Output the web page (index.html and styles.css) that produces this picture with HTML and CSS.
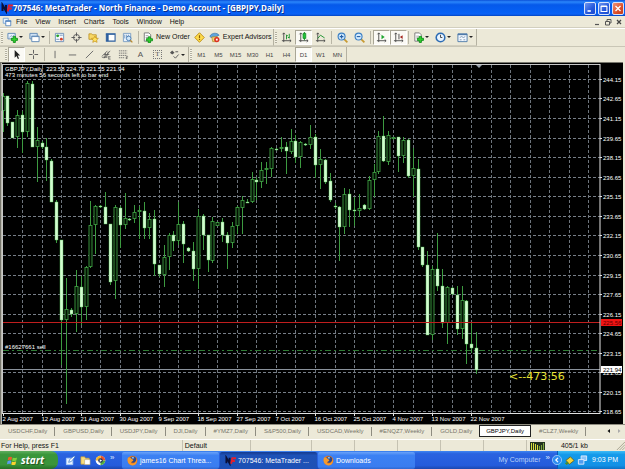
FILE: index.html
```html
<!DOCTYPE html>
<html lang="en">
<head>
<meta charset="utf-8">
<title>707546: MetaTrader - North Finance - Demo Account - [GBPJPY,Daily]</title>
<link rel="stylesheet" href="styles.css">
</head>
<body>
<svg class="defs" aria-hidden="true">
  <defs>
    <symbol id="plus" viewBox="0 0 7 7"><path d="M2.5 .5h2v2h2v2h-2v2h-2v-2h-2v-2h2z" fill="#2fd32f" stroke="#0d8a16" stroke-width=".8"/></symbol>
    <symbol id="fox" viewBox="0 0 12 12"><circle cx="6" cy="6" r="5.3" fill="#e8761a"/><circle cx="6.6" cy="5" r="3.4" fill="#27478f"/><path d="M1 3C3 2 5 4 7 5.500 6 8 4 7 4.500 9 8 10 10 8 10.500 4 12 9 8 12 5 11.200 1 10 0 6 1 3z" fill="#f79a2b"/><path d="M5 2.500l2-.6 1 1.600-2 .6z" fill="#8fc0ee"/></symbol>
    <symbol id="nf" viewBox="0 0 12 12"><path d="M1.500 9V3l3.500 6V3" fill="none" stroke="#0b0f35" stroke-width="2"/><path d="M6.700 9.500L8 3.500h4M7.300 6.500h3.500" fill="none" stroke="#e3202c" stroke-width="2"/></symbol>
    <symbol id="axes" viewBox="0 0 12 12"><path d="M3 1v10M1 9.500h10M1.700 2.500L3 1l1.300 1.500M9.500 8.200L11 9.500 9.500 10.800" fill="none" stroke="#4c4c4c" stroke-width="1"/></symbol>
  </defs>
</svg>

<header class="titlebar">
  <svg class="ico"><use href="#nf"/></svg>
  <h1>707546: MetaTrader - North Finance - Demo Account - [GBPJPY,Daily]</h1>
  <div class="winbtns">
    <button aria-label="Minimize"><svg viewBox="0 0 12 12"><path d="M3 9h4" stroke="#fff" stroke-width="2"/></svg></button>
    <button aria-label="Maximize"><svg viewBox="0 0 12 12"><path d="M2.500 3.500h7v6h-7zM2.500 3h7" fill="none" stroke="#fff" stroke-width="1.300"/></svg></button>
    <button class="close" aria-label="Close"><svg viewBox="0 0 12 12"><path d="M3 3l6 6M9 3l-6 6" stroke="#fff" stroke-width="1.600"/></svg></button>
  </div>
</header>

<nav class="menubar">
  <svg class="ico" viewBox="0 0 12 12"><path d="M1.500 1.500h6v6h-6z" fill="#eaf4ff" stroke="#6d9ccf"/><path d="M4.500 4.500h6v6h-6z" fill="#fff" stroke="#4c80bd"/><path d="M4 5h7" stroke="#4c80bd" stroke-width="1.500"/></svg>
  <button>File</button><button>View</button><button>Insert</button><button>Charts</button><button>Tools</button><button>Window</button><button>Help</button>
  <div class="mdi">
    <button aria-label="Minimize chart"><svg viewBox="0 0 8 8"><path d="M2 6.500h4" stroke="#555" stroke-width="1.200"/></svg></button>
    <button aria-label="Restore chart"><svg viewBox="0 0 8 8"><path d="M3 3V1.500h4V5H5.500M1.500 3.500h4v3.500h-4z" fill="none" stroke="#555"/></svg></button>
    <button aria-label="Close chart"><svg viewBox="0 0 8 8"><path d="M2 2l4 4M6 2L2 6" stroke="#444" stroke-width="1.300"/></svg></button>
  </div>
</nav>

<div class="toolrow">
  <div class="toolbar">
    <i class="grip"></i>
    <button class="dd" aria-label="New chart"><svg viewBox="0 0 12 12"><path d="M1 1.500h8v6H1z" fill="#eaf3fc" stroke="#5d87b5"/><path d="M2.500 6l2-2 1.500 1 2-2" fill="none" stroke="#5d87b5" stroke-width=".7"/><use href="#plus" x="4" y="4" width="8" height="8"/></svg></button>
    <button class="dd" aria-label="Profiles"><svg viewBox="0 0 12 12"><path d="M1 1.500h8v6H1z" fill="#cfe2f5" stroke="#5d87b5"/><path d="M3 4.500h8v6H3z" fill="#fff" stroke="#5d87b5"/><path d="M3 5h8" stroke="#5d87b5"/></svg></button>
    <i class="sep s3"></i>
    <button aria-label="Market watch"><svg viewBox="0 0 12 12"><path d="M1.500 1.500h9v9h-9z" fill="#f5faff" stroke="#6c8fb8"/><circle cx="4" cy="4.200" r="1.600" fill="#2aa12a"/><circle cx="8" cy="7.800" r="1.600" fill="#d5432c"/><path d="M6 3.500h3.500M2.500 8h3" stroke="#7795b8"/></svg></button>
    <button aria-label="Data window"><svg viewBox="0 0 12 12"><circle cx="6" cy="6" r="3.300" fill="none" stroke="#555"/><path d="M6 .5v4M6 7.500v4M.5 6h4M7.500 6h4" stroke="#555"/></svg></button>
    <button aria-label="Navigator"><svg viewBox="0 0 12 12"><path d="M1 2h3l1 1h4v5H1z" fill="#f7d765" stroke="#b68a1c" stroke-width=".8"/><path d="M7.500 4.500l1.200 2.200 2.600.3-1.900 1.800.5 2.500-2.400-1.200-2.300 1.200.5-2.500-1.900-1.800 2.600-.3z" fill="#ffe25e" stroke="#c08c10" stroke-width=".7"/></svg></button>
    <button aria-label="Terminal"><svg viewBox="0 0 12 12"><path d="M1.500 2h9.500v8H1.500z" fill="#fff" stroke="#2d5f9e" stroke-width="1.200"/><path d="M3 2v8" stroke="#2d5f9e" stroke-width="2"/><path d="M1 2.500h10" stroke="#2d5f9e"/></svg></button>
    <button aria-label="Strategy tester"><svg viewBox="0 0 12 12"><path d="M1.500 1.500h8v9h-8z" fill="#e9f2fb" stroke="#7a9cc2"/><path d="M3 3v4M5 3v3M7 3v2" stroke="#7a9cc2"/><circle cx="7.300" cy="7" r="2.500" fill="#cfe6fa" stroke="#4a7db5"/><path d="M9 9l2.300 2.300" stroke="#b98a2e" stroke-width="1.400"/></svg></button>
    <i class="sep s5"></i>
    <button class="txt"><svg viewBox="0 0 12 12"><path d="M2.500 1h5l2 2v7h-7z" fill="#fff" stroke="#777"/><path d="M4 4h3M4 6h3" stroke="#888" stroke-width=".8"/><use href="#plus" x="4" y="4.500" width="8" height="8"/></svg>New Order</button>
    <button aria-label="MetaEditor"><svg viewBox="0 0 12 12"><path d="M6 .8L11.200 6 6 11.200.8 6z" fill="#ffdc4a" stroke="#b98b12"/><path d="M6 3.500v3.200M6 7.600v1.200" stroke="#8d5f05" stroke-width="1.300"/></svg></button>
    <button class="txt ea" aria-pressed="false"><svg viewBox="0 0 12 12"><path d="M1 4.500C3 .5 9 .5 11 3.500l-4 2-5 .5z" fill="#5fa5dc" stroke="#3572a8" stroke-width=".7"/><path d="M3 5.500l1 5h4l1-5.500z" fill="#f2cf6d" stroke="#a98026" stroke-width=".7"/><circle cx="8.500" cy="8.300" r="2.900" fill="#dc2f1f"/><path d="M7.500 7.300h2v2h-2z" fill="#fff"/></svg>Expert Advisors</button>
  </div>
  <div class="toolbar">
    <i class="grip"></i>
    <button aria-label="Bar chart"><svg viewBox="0 0 12 12"><use href="#axes"/><path d="M6 3v5M9 2v5M6 4h1.500M7.500 6H9" stroke="#17912a" stroke-width="1"/></svg></button>
    <button class="on" aria-label="Candlesticks"><svg viewBox="0 0 12 12"><use href="#axes"/><path d="M7 0v9" stroke="#128a22"/><path d="M5.500 1.500h3v5.500h-3z" fill="#22c43a" stroke="#128a22" stroke-width=".8"/></svg></button>
    <button aria-label="Line chart"><svg viewBox="0 0 12 12"><use href="#axes"/><path d="M3 7l3-3.500 4.500 3" fill="none" stroke="#17912a"/></svg></button>
    <i class="sep s5"></i>
    <button aria-label="Zoom in"><svg viewBox="0 0 12 12"><path d="M7.500 7.500L11.300 11.300" stroke="#c79a32" stroke-width="1.900"/><circle cx="5" cy="5" r="3.800" fill="#d3ebff" stroke="#3b7fc4" stroke-width="1.200"/><path d="M3 5h4M5 3v4" stroke="#245fa5" stroke-width="1.200"/></svg></button>
    <button aria-label="Zoom out"><svg viewBox="0 0 12 12"><path d="M7.500 7.500L11.300 11.300" stroke="#c79a32" stroke-width="1.900"/><circle cx="5" cy="5" r="3.800" fill="#d3ebff" stroke="#3b7fc4" stroke-width="1.200"/><path d="M3 5h4" stroke="#245fa5" stroke-width="1.200"/></svg></button>
    <i class="sep s5"></i>
    <button class="on" aria-label="Auto scroll"><svg viewBox="0 0 12 12"><use href="#axes"/><path d="M6 3l3.500 2.500L6 8z" fill="#1da52e"/></svg></button>
    <button class="on" aria-label="Chart shift"><svg viewBox="0 0 12 12"><use href="#axes"/><path d="M6.500 2v6" stroke="#444"/><path d="M10.500 3.500L7.500 5.500l3 2z" fill="#a3231c"/></svg></button>
    <i class="sep s3"></i>
    <button class="dd" aria-label="Indicators"><svg viewBox="0 0 12 12"><path d="M2 1h5l2 2v7H2z" fill="#fff" stroke="#777"/><path d="M3.500 4.500h3M3.500 6.500h3" stroke="#888" stroke-width=".8"/><use href="#plus" x="4" y="4" width="8" height="8"/></svg></button>
    <button class="dd" aria-label="Periods"><svg viewBox="0 0 12 12"><circle cx="6" cy="6" r="4.700" fill="#e9f4ff" stroke="#2c6cb4" stroke-width="1.700"/><path d="M6 3v3h2" fill="none" stroke="#444"/></svg></button>
    <button class="dd" aria-label="Templates"><svg viewBox="0 0 12 12"><path d="M1 2h10v8.500H1z" fill="#f2f8ff" stroke="#4d79a9"/><path d="M1 2.700h10" stroke="#4d79a9" stroke-width="1.500"/><path d="M3 6l2-1 2 1 2-1M3 8.500h2M7 8.500h2" fill="none" stroke="#61809f" stroke-width=".8"/></svg></button>
  </div>
</div>

<div class="toolrow low">
  <div class="toolbar draw">
    <i class="grip"></i>
    <button class="on" aria-label="Cursor"><svg viewBox="0 0 12 12"><path d="M4 1v8.500l2-2 1.500 3.500 1.300-.6L7.300 7H10z" fill="#222"/></svg></button>
    <button aria-label="Crosshair"><svg viewBox="0 0 12 12"><path d="M6 1v4M6 7v4M1 6h4M7 6h4" stroke="#555"/></svg></button>
    <i class="sep s5"></i>
    <button aria-label="Vertical line"><svg viewBox="0 0 12 12"><path d="M5.500 2v8" stroke="#666"/></svg></button>
    <button aria-label="Horizontal line"><svg viewBox="0 0 12 12"><path d="M2 6.500h8" stroke="#666"/></svg></button>
    <button aria-label="Trendline"><svg viewBox="0 0 12 12"><path d="M2 10l8-8" stroke="#666"/></svg></button>
    <button aria-label="Channel"><svg viewBox="0 0 12 12"><path d="M1 8l6-6M3 10l7-8M1 9h6M3 6h6M5 4l-1 6M8 3L6 9M8 8.500h2.500M8 11h2.500M8.500 8v3" stroke="#555" stroke-width=".8"/></svg></button>
    <button aria-label="Fibonacci"><svg viewBox="0 0 12 12"><path d="M1 2h9M1 4.500h9M1 7h9M1 9.500h6" stroke="#666" stroke-width=".9" stroke-dasharray="1.500 .6"/><path d="M9 11V8.500h2M9 10h1.500" fill="none" stroke="#555" stroke-width=".8"/></svg></button>
    <button class="letter">A</button>
    <button class="letter" aria-label="Text label"><span class="boxed">T</span></button>
    <button class="dd" aria-label="Arrows"><svg viewBox="0 0 12 12"><path d="M1 4l2.500-2.500L6 4 3.500 6z" fill="#555"/><path d="M5 8l2 2 3.500-4M7 3l3 0" fill="none" stroke="#555"/></svg></button>
  </div>
  <div class="toolbar periods">
    <i class="grip"></i>
    <button>M1</button><button>M5</button><button>M15</button><button>M30</button><button>H1</button><button>H4</button><button class="on" aria-pressed="true">D1</button><button>W1</button><button>MN</button>
  </div>
</div>

<main class="chart">
  <svg id="plot" viewBox="0 62 625 362" role="img" aria-label="GBPJPY daily candlestick chart"></svg>
</main>

<nav class="tabs">
  <button>USDCHF,Daily</button><button>GBPUSD,Daily</button><button>USDJPY,Daily</button><button>DJI,Daily</button><button>#YMZ7,Daily</button><button>S&amp;P500,Daily</button><button>USDCAD,Weekly</button><button>#ENQZ7,Weekly</button><button class="last">GOLD,Daily</button><button class="active" aria-current="page">GBPJPY,Daily</button><button>#CLZ7,Weekly</button>
  <div class="scroll"><button aria-label="Scroll tabs left"><svg viewBox="0 0 6 6"><path d="M4 1v4L1.500 3z" fill="#111"/></svg></button><button aria-label="Scroll tabs right"><svg viewBox="0 0 6 6"><path d="M2 1v4l2.500-2z" fill="#aaa"/></svg></button></div>
</nav>

<footer class="status">
  <span class="help">For Help, press F1</span><span class="profile">Default</span><span class="date"></span><span></span><span></span><span></span><span></span><span></span>
  <span class="traffic"><svg viewBox="0 0 15 8"><path d="M0 0h15v8H0z" fill="#24331f"/><path d="M1.500 8V1M3.500 8V1M5.500 8V2M7.500 8V3" stroke="#d7dc3d"/><path d="M9.500 8V4M11.500 8V3M13.500 8V1" stroke="#7fa63f"/></svg>405/1 kb</span>
  <svg class="resize" viewBox="0 0 10 10"><path d="M1 10l9-9M4 10l6-6M7 10l3-3" stroke="#a5a28f"/></svg>
</footer>

<div class="taskbar">
  <button class="start"><svg viewBox="0 0 12 12"><path d="M1.500 2.500C3 1.500 4 1.700 5.500 2.500L4.800 5.800C3.400 5 2.300 5 .8 5.800z" fill="#ee5a2b"/><path d="M6.300 2.800c1.500.8 3 .8 4.700-.2L10.200 6c-1.700 1-3.100.9-4.600.2z" fill="#7fd13b"/><path d="M.6 6.700c1.500-.8 2.700-.8 4-.1L3.900 10C2.500 9.200 1.400 9.300 0 10z" fill="#5b9bf0"/><path d="M5.400 7c1.500.8 3 .8 4.600-.1l-.8 3.400c-1.500 1-3 .9-4.500.1z" fill="#fbd22e"/></svg>start</button>
  <div class="quick">
    <button aria-label="Show desktop"><svg viewBox="0 0 12 12"><path d="M1.500 3.500h7v7h-7z" fill="#e8f2ff" stroke="#a9cdf6"/><path d="M4 8l1-3 5-4 1 1-4 5z" fill="#fff" stroke="#3a78c8" stroke-width=".8"/></svg></button>
    <button aria-label="Explorer"><svg viewBox="0 0 12 12"><path d="M1 2h4l1 1.500h4V10H1z" fill="#f6dc7d" stroke="#c39a31" stroke-width=".7"/><path d="M5 5h6v5.500H5z" fill="#fff" stroke="#b0a070" stroke-width=".6"/></svg></button>
    <button aria-label="Media player"><svg viewBox="0 0 12 12"><circle cx="6" cy="6" r="5.200" fill="#fff"/><path d="M6 .8A5.200 5.200 0 0 1 11.200 6L6 6z" fill="#e7542a"/><path d="M11.200 6A5.200 5.200 0 0 1 6 11.200V6z" fill="#55ad3d"/><path d="M.8 6A5.200 5.200 0 0 1 6 .8V6z" fill="#f4b52b"/><circle cx="6" cy="6" r="2.500" fill="#26355e"/><path d="M5.200 4.500L7.700 6 5.200 7.500z" fill="#fff"/></svg></button>
    <span class="more">»</span>
  </div>
  <div class="tasks">
    <button><svg><use href="#fox"/></svg>james16 Chart Threa...</button>
    <button class="current"><svg><use href="#nf"/></svg>707546: MetaTrader ...</button>
    <button><svg><use href="#fox"/></svg>Downloads</button>
  </div>
  <div class="mycomp"><span>My Computer</span><span class="more">»</span></div>
  <div class="tray">
    <button class="chev" aria-label="Show hidden icons"><svg viewBox="0 0 10 10"><circle cx="5" cy="5" r="4.600" fill="#2f8df0" stroke="#b8dcff" stroke-width=".7"/><path d="M6 2.800L3.800 5 6 7.200" fill="none" stroke="#fff" stroke-width="1.200"/></svg></button>
    <svg viewBox="0 0 12 12"><path d="M2 6l5-4 4 4-5 4z" fill="#f3d43b" stroke="#5d5312" stroke-width=".8"/><path d="M1 9l3-2 1 2-2 2z" fill="#4a8c2c"/></svg>
    <svg viewBox="0 0 12 12"><path d="M4.500 1h6v5h-6z" fill="#8cc4f7" stroke="#dcecff"/><path d="M1.500 5h6v5h-6z" fill="#4f9df0" stroke="#dcecff"/></svg>
    <time>9:03 PM</time>
  </div>
</div>
<script src="chart.js"></script>
</body>
</html>
```
FILE: styles.css
```css
* { box-sizing: border-box; }
html, body { height: 100%; }
body {
  margin: 0;
  display: flex;
  flex-direction: column;
  overflow: hidden;
  background: #ece9d8;
  color: #111;
  font: 7px/10px "Liberation Sans", Arial, sans-serif;
}
button {
  margin: 0;
  padding: 0;
  border: 0;
  background: none;
  color: inherit;
  font: inherit;
  white-space: nowrap;
}
svg { display: block; flex: none; }
.defs { position: absolute; width: 0; height: 0; }

.titlebar {
  flex: none;
  height: 16px;
  display: flex;
  align-items: center;
  padding: 0 1px;
  background: linear-gradient(#0a50d8, #2a86fb 12%, #0559ea 30%, #0560f4 75%, #0a62f5 88%, #0344c0);
}
.titlebar .ico { width: 12px; height: 12px; }
.titlebar h1 {
  margin: 0;
  flex: 1;
  color: #fff;
  font: bold 8px/12px "Open Sans", sans-serif;
  text-shadow: 1px 1px 0 #0a2f8c;
  white-space: nowrap;
}
.winbtns { display: flex; gap: 2px; }
.winbtns button {
  width: 12px;
  height: 13px;
  border: 1px solid #d7e3fb;
  border-radius: 2px;
  background: linear-gradient(135deg, #6e96f0, #2457dc 60%, #1a4bd0);
}
.winbtns .close { background: linear-gradient(135deg, #ef9478, #dc4f2a 60%, #c13c1a); }
.winbtns svg { width: 10px; height: 11px; }

.menubar {
  flex: none;
  height: 12px;
  display: flex;
  align-items: center;
  padding-left: 2px;
  border-bottom: 1px solid #d2cfbf;
}
.menubar .ico { width: 10px; height: 10px; }
.menubar > button { padding: 0 4px; }
.mdi { display: flex; gap: 3px; margin-left: auto; padding-right: 2px; }
.mdi svg { width: 8px; height: 8px; }

.toolrow { flex: none; height: 18px; display: flex; border-top: 1px solid #fff; }
.toolrow.low { height: 16px; border-top-color: #c9c6b6; }
.toolbar {
  display: flex;
  align-items: center;
  border-right: 1px solid #b5b2a2;
  border-bottom: 1px solid #d2cfbf;
}
.low .toolbar { border-bottom: 0; }
.toolbar .grip {
  flex: none;
  width: 2px;
  height: 11px;
  margin: 0 1px;
  background: repeating-linear-gradient(#b1ae9e 0 1px, #f7f5ea 1px 2px);
}
.toolbar .sep { flex: none; height: 13px; border-left: 1px solid #b9b6a6; }
.sep.s3 { width: 1px; margin: 0 1px; }
.sep.s5 { width: 1px; margin: 0 2px; }
.toolbar button {
  width: 17px;
  height: 15px;
  display: flex;
  align-items: center;
  justify-content: center;
}
.toolbar svg { width: 11px; height: 11px; }
.toolbar .dd { width: 22px; gap: 1px; }
.toolbar .dd::after {
  content: "";
  border: 2px solid transparent;
  border-top-color: #222;
  border-bottom: 0;
}
.toolbar .txt { width: auto; gap: 3px; padding: 0 1px; }
.toolbar .ea { padding-right: 2px; }
.toolbar .on { background: #fbfaf5; border: 1px solid; border-color: #a9a696 #fff #fff #a9a696; }
.draw { padding-left: 4px; }
.draw .letter { font-size: 8px; color: #555; }
.boxed { border: 1px dotted #777; padding: 0 1px; font: 7px/7px "Liberation Serif", serif; }
.periods { color: #444; font-size: 6px; }

.chart { flex: 1; min-height: 0; background: #000; }
.chart svg { width: 100%; height: 100%; }
.chart text { font: 6px "Liberation Sans", Arial, sans-serif; fill: #fff; }
.chart .note { font: 11px "DejaVu Sans", sans-serif; fill: #e9e436; }
.chart .on-red { fill: #5c0000; }
.chart .on-white { fill: #000; }

.tabs {
  flex: none;
  height: 15px;
  display: flex;
  align-items: center;
  padding: 0 3px 2px 0;
  border-top: 1px solid #8e8c80;
  color: #77756a;
  font-size: 6px;
}
.tabs > button { height: 9px; line-height: 9px; padding: 0 7px 0 8px; border-right: 1px solid #8e8c80; }
.tabs > .last { border-right: 0; }
.tabs > .active {
  height: 12px;
  line-height: 10px;
  padding: 0 6px;
  border: 1px solid #222;
  background: #fff;
  color: #000;
}
.scroll { display: flex; gap: 4px; margin-left: auto; }
.scroll svg { width: 6px; height: 6px; }

.status { flex: none; height: 12px; display: flex; align-items: center; border-top: 1px solid #fff; }
.status span {
  flex: 43 1 0;
  height: 11px;
  line-height: 11px;
  border-right: 1px solid #c5c2b2;
}
.status .help { flex-grow: 185; padding-left: 1px; }
.status .profile { flex-grow: 67; padding-left: 2px; }
.status .date { flex-grow: 61; }
.status .traffic { flex: 88 1 0; display: flex; align-items: center; gap: 16px; padding-left: 3px; border: 0; }
.traffic svg { width: 15px; height: 8px; }
.resize { width: 9px; height: 9px; }

.taskbar {
  flex: none;
  height: 18px;
  display: flex;
  color: #fff;
  background: linear-gradient(#3f87f2, #2a63e0 15%, #245cdc 80%, #1b47ae);
}
.start {
  width: 58px;
  display: flex;
  align-items: center;
  gap: 3px;
  padding-left: 7px;
  border-radius: 0 7px 7px 0;
  background: linear-gradient(#5fae5f, #3a963a 20%, #3a943a 75%, #256f25);
  font: italic bold 10px/16px "Open Sans", sans-serif;
  text-shadow: 1px 1px 1px #1d4d1d;
}
.taskbar .start { color: #fff; }
.taskbar svg { width: 11px; height: 11px; }
.quick { width: 64px; display: flex; align-items: center; gap: 4px; padding-left: 7px; }
.more { font-size: 8px; line-height: 8px; margin-bottom: 4px; color: #dfe9ff; }
.tasks { flex: 1; display: flex; gap: 1px; }
.tasks button {
  flex: 0 1 97px;
  display: flex;
  align-items: center;
  gap: 2px;
  height: 17px;
  margin-top: 1px;
  padding-left: 5px;
  border-radius: 2px;
  background: linear-gradient(#6aa2f8, #3c81f3 20%, #3a7df0 85%, #2f68d0);
}
.tasks .current { background: linear-gradient(#153a8e, #1e52b7 20%, #1d50b5); }
.mycomp { display: flex; align-items: center; gap: 5px; padding-right: 7px; color: #bcd2f8; }
.tray {
  width: 68px;
  display: flex;
  align-items: center;
  gap: 2px;
  border-left: 1px solid #0b59b5;
  background: linear-gradient(#3fbcf7, #149aea 20%, #1291e6 80%, #0d70c4);
}
.chev { margin-left: -6px; }
.tray .chev svg { width: 10px; height: 10px; }
.tray time { margin-left: 2px; }
```
FILE: chart.js
```js
// Each bar: kind (1 = bearish, filled; 0 = bullish, hollow), body top, body bottom, high, low.
const bars = [
  [0,96,111,93,132],[1,96,123,96,126],[1,122,138,122,138],[0,115,137,110,148],[1,115,132,111,153],
  [0,83,132,81,137],[1,84,147,81,147],[0,140,147,127,182],[1,143,147,141,149],[1,147,160,138,181],
  [1,161,202,159,202],[1,202,240,200,243],[1,240,320,240,365],[0,309,320,278,404],[1,310,314,308,317],
  [0,286,314,270,332],[1,287,307,276,325],[0,267,307,266,320],[0,225,267,201,268],[0,206,225,205,254],
  [1,206,207,205,208],[1,207,224,192,224],[1,224,282,224,285],[0,207,281,205,299],[1,208,225,206,248],
  [0,218,225,193,229],[1,219,220,218,221],[0,212,219,205,223],[0,210,212,206,239],[1,211,228,202,239],
  [0,219,228,213,239],[1,219,264,210,276],[1,265,274,265,277],[0,257,275,245,287],[0,235,257,233,270],
  [1,235,241,231,251],[0,224,241,202,245],[1,224,244,221,263],[1,248,251,247,252],[1,251,269,242,281],
  [0,216,269,209,289],[1,216,235,214,250],[1,235,260,235,272],[0,221,261,217,263],[0,222,226,222,226],
  [1,222,235,218,242],[1,235,243,232,269],[0,226,243,222,248],[0,207,226,206,234],[0,200,208,196,234],
  [1,202,203,199,203],[0,179,202,172,203],[1,180,182,177,200],[0,170,182,162,188],[0,168,170,162,184],
  [0,148,169,147,177],[1,149,150,148,150],[0,147,149,137,152],[1,147,151,142,174],[0,141,152,129,154],
  [1,141,157,135,163],[0,142,157,141,168],[1,144,145,143,146],[0,137,145,125,149],[1,137,165,134,178],
  [0,159,165,149,189],[1,160,182,159,184],[1,181,200,173,202],[1,206,207,203,209],[1,207,227,206,261],
  [0,194,227,188,234],[1,194,210,189,227],[1,210,211,197,226],[0,208,211,194,217],[1,205,209,204,210],
  [0,180,209,176,210],[0,172,180,164,197],[0,136,172,131,174],[1,136,161,116,162],[0,135,162,131,165],
  [0,137,139,137,140],[1,137,156,137,172],[0,140,156,137,163],[1,140,176,139,178],[0,168,176,148,197],
  [1,169,247,159,250],[1,247,265,247,267],[1,265,335,251,335],[0,269,335,266,340],[1,269,286,233,291],
  [1,286,323,269,328],[0,287,323,286,344],[1,288,294,287,295],[1,295,329,286,335],[0,300,329,286,339],
  [1,301,344,300,364],[1,344,348,323,353],[1,348,370,332,374]
];
const dates = ["2 Aug 2007","12 Aug 2007","21 Aug 2007","30 Aug 2007","9 Sep 2007","18 Sep 2007","27 Sep 2007",
  "7 Oct 2007","16 Oct 2007","25 Oct 2007","4 Nov 2007","13 Nov 2007","22 Nov 2007"];

const plot = document.getElementById("plot");
const out = [];
const line = (x1, y1, x2, y2, color, extra = "") =>
  out.push(`<path d="M${x1} ${y1}L${x2} ${y2}" stroke="${color}" ${extra}/>`);
const rect = (x, y, w, h, fill, extra = "") =>
  out.push(`<rect x="${x}" y="${y}" width="${w}" height="${h}" fill="${fill}" ${extra}/>`);
const label = (x, y, s, cls = "") => out.push(`<text x="${x}" y="${y}" class="${cls}">${s}</text>`);
const half = v => Math.round(v - 0.5) + 0.5;

// Window frame
rect(0, 62, 625, 362, "#000");
rect(0, 62, 625, 1, "#77766c");
rect(0, 62, 1, 362, "#77766c");
rect(1, 63, 1, 361, "#b9b8ae");
rect(623, 62, 2, 362, "#ece9d8");

// Grid
for (let k = 1; k <= 30; k++) {
  const x = half(3 + k * 19.53);
  line(x, 65, x, 413, "#6d747c", 'stroke-dasharray="3 2"');
}
for (let k = 0; k <= 17; k++) {
  const y = half(79.4 + k * 19.56);
  line(3, y, 600, y, "#777e87", 'stroke-dasharray="3 2"');
  line(600, y, 602, y, "#ddd");
  label(603, y + 2, (244.15 - k * 1.5).toFixed(2));
}

// Price and order levels
line(3, 369.5, 600, 369.5, "#8a929c");
line(3, 350.5, 600, 350.5, "#2f7d35", 'stroke-dasharray="6 3 2 3"');

// Candles
bars.forEach(([filled, top, bottom, high, low], i) => {
  const x = half(3 + i * 4.883);
  line(x, high, x, low, "#3c9a40");
  if (filled) rect(x - 1.5, top, 3, Math.max(1, bottom - top), "#d3fbd0", 'stroke="#50c254" stroke-width=".4"');
  else rect(x - 1.5, top + 0.5, 3, Math.max(1, bottom - top - 1), "#021002", 'stroke="#3c9a40" stroke-width=".9"');
});
line(3, 322.5, 600, 322.5, "#c01e1e");

// Axes
line(2, 64.5, 600, 64.5, "#c8c8c8");
line(2.5, 64, 2.5, 414, "#c8c8c8");
line(600, 64, 600, 414, "#e8e8e8");
line(2, 413.5, 600, 413.5, "#e0e0e0");
dates.forEach((d, k) => {
  const x = half(3 + k * 39.06);
  line(x, 413, x, 416, "#e0e0e0");
  label(x - 1, 421, d);
});
out.push('<path d="M476 65h6l-3 3z" fill="#9aa3ad"/>');

// Price tags
rect(601, 319, 21, 7, "#f01414");
label(603, 325, "225.56", "on-red");
rect(601, 366, 21, 7, "#fff");
label(603, 372, "221.94", "on-white");

// Captions
label(5, 71, "GBPJPY,Daily&#160; 223.58 224.79 221.55 221.94");
label(5, 77, "473 minutes 56 seconds left to bar end");
label(5, 349, "#16627661 sell");
label(509, 380, "&lt;--473:56", "note");

plot.innerHTML = out.join("");
```
